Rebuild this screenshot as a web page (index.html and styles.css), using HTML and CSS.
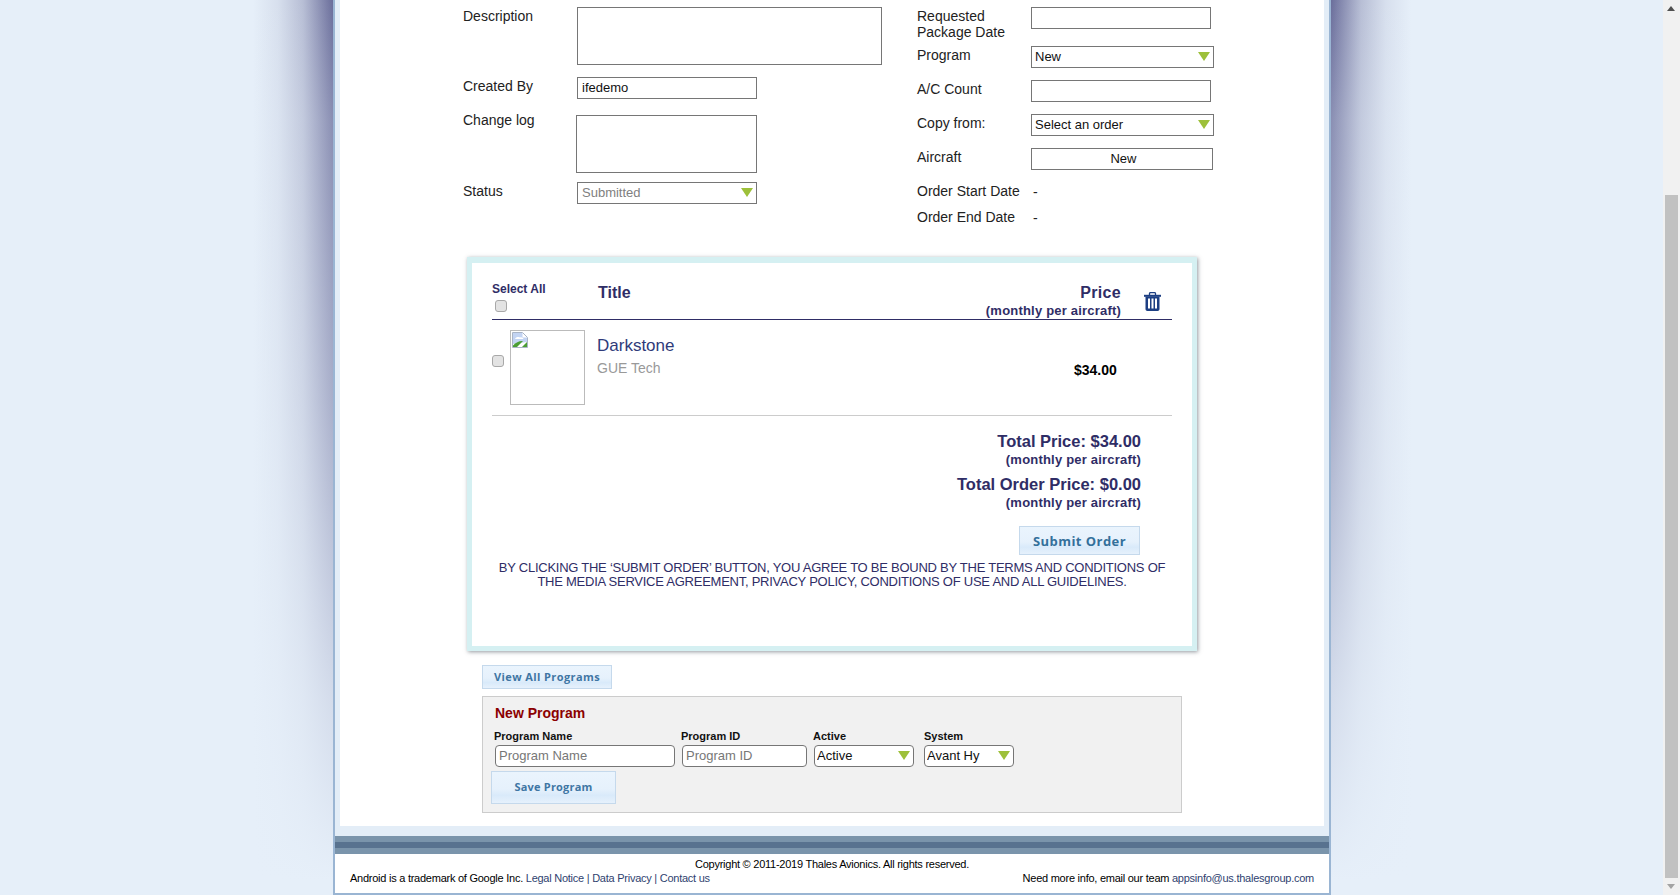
FILE: index.html
```html
<!DOCTYPE html>
<html lang="en">
<head>
<meta charset="utf-8">
<title>New Order</title>
<link rel="stylesheet" href="styles.css">
</head>
<body>
<div class="screen">
  <div class="shade shade-left"></div>
  <div class="wrapper">
    <main class="content">
      <form class="order-form">
        <div class="form-col col-left">
          <label class="lbl">Description</label>
          <textarea class="field ta-wide"></textarea>
          <label class="lbl">Created By</label>
          <input class="field w-180" type="text" value="ifedemo">
          <label class="lbl">Change log</label>
          <textarea class="field ta-log"></textarea>
          <label class="lbl">Status</label>
          <div class="sel w-180"><select class="field-sel muted" disabled><option>Submitted</option></select></div>
        </div>
        <div class="form-col col-right">
          <label class="lbl">Requested<br>Package Date</label>
          <input class="field w-180" type="text">
          <label class="lbl">Program</label>
          <div class="sel w-183"><select class="field-sel"><option>New</option></select></div>
          <label class="lbl">A/C Count</label>
          <input class="field w-180" type="text">
          <label class="lbl">Copy from:</label>
          <div class="sel w-183"><select class="field-sel"><option>Select an order</option></select></div>
          <label class="lbl">Aircraft</label>
          <button class="field new-btn" type="button">New</button>
          <span class="lbl">Order Start Date</span>
          <span class="dash">-</span>
          <span class="lbl">Order End Date</span>
          <span class="dash">-</span>
        </div>
      </form>

      <section class="cart">
        <div class="cart-head">
          <div class="select-all">
            <div class="select-all-text">Select All</div>
            <input class="check check-all" type="checkbox">
          </div>
          <div class="head-title">Title</div>
          <div class="head-price">
            <div class="head-price-main">Price</div>
            <div class="per head-per">(monthly per aircraft)</div>
          </div>
          <svg class="trash" viewBox="0 0 17 19" width="17" height="19" aria-hidden="true">
            <path d="M5.5 3V1.6C5.5 1 6 .6 6.6 .6h3.8c.6 0 1.1 .4 1.1 1V3" fill="none" stroke="#1d3f83" stroke-width="1.3"/>
            <rect x="0" y="2.8" width="17" height="2" fill="#1d3f83"/>
            <path d="M1.5 4.5h14V17c0 1.1-.8 2-1.9 2H3.4c-1.1 0-1.9-.9-1.9-2z" fill="#1d3f83"/>
            <rect x="4" y="6.5" width="2" height="10" fill="#fff"/>
            <rect x="7.5" y="6.5" width="2" height="10" fill="#fff"/>
            <rect x="11" y="6.5" width="2" height="10" fill="#fff"/>
          </svg>
        </div>
        <div class="cart-item">
          <input class="check check-item" type="checkbox">
          <div class="thumb">
            <svg viewBox="0 0 16 16" width="16" height="16" aria-hidden="true">
              <path d="M.5 .5h10l5 5v10H.5z" fill="#fff" stroke="#a9b4c6"/>
              <path d="M1 1h9.500v4.500H15V10L1 12z" fill="#c3d4f3"/>
              <path d="M3 7c1-2 3-2.500 5-1.500 2-.5 3 .5 3.500 1.500z" fill="#fff"/>
              <path d="M1 15v-1.500C4 10 8 8.500 11 9l-6 6z" fill="#4c9e35"/>
              <path d="M10 15l5-5v5z" fill="#4c9e35"/>
            </svg>
          </div>
          <div class="item-info">
            <div class="item-name">Darkstone</div>
            <div class="item-vendor">GUE Tech</div>
          </div>
          <div class="item-price">$34.00</div>
        </div>
        <div class="totals">
          <div class="total">Total Price: $34.00</div>
          <div class="per total-per">(monthly per aircraft)</div>
          <div class="total total-gap">Total Order Price: $0.00</div>
          <div class="per total-per">(monthly per aircraft)</div>
        </div>
        <div class="submit-row"><button class="btn btn-submit" type="button">Submit Order</button></div>
        <p class="legal">BY CLICKING THE ‘SUBMIT ORDER’ BUTTON, YOU AGREE TO BE BOUND BY THE TERMS AND CONDITIONS OF THE MEDIA SERVICE AGREEMENT, PRIVACY POLICY, CONDITIONS OF USE AND ALL GUIDELINES.</p>
      </section>

      <button class="btn btn-view" type="button">View All Programs</button>

      <section class="new-program">
        <h3 class="np-title">New Program</h3>
        <div class="np-fields">
          <div class="np-field f-name">
            <label class="np-label">Program Name</label>
            <input class="field np-input w-full-name" type="text" placeholder="Program Name">
          </div>
          <div class="np-field f-id">
            <label class="np-label">Program ID</label>
            <input class="field np-input w-full-id" type="text" placeholder="Program ID">
          </div>
          <div class="np-field f-active">
            <label class="np-label">Active</label>
            <div class="sel round w-100"><select class="field-sel"><option>Active</option></select></div>
          </div>
          <div class="np-field f-system">
            <label class="np-label">System</label>
            <div class="sel round w-90"><select class="field-sel"><option>Avant Hy</option></select></div>
          </div>
        </div>
        <button class="btn btn-save" type="button">Save Program</button>
      </section>
    </main>
    <div class="gap-pale"></div>
    <div class="bands"></div>
    <footer class="footer">
      <div class="copy">Copyright © 2011-2019 Thales Avionics. All rights reserved.</div>
      <div class="foot-row">
        <div>Android is a trademark of Google Inc. <a href="#">Legal Notice</a> <span class="pipe">|</span> <a href="#">Data Privacy</a> <span class="pipe">|</span> <a href="#">Contact us</a></div>
        <div>Need more info, email our team <a href="#">appsinfo@us.thalesgroup.com</a></div>
      </div>
    </footer>
  </div>
  <div class="shade shade-right"></div>
  <div class="scrollbar">
    <div class="arrow arrow-up"></div>
    <div class="track"><div class="thumb-bar"></div></div>
    <div class="arrow arrow-down"></div>
  </div>
</div>
</body>
</html>
```

FILE: styles.css
```css
* { box-sizing: border-box; }
html, body { margin: 0; height: 895px; overflow: hidden; }
body { font-family: "Liberation Sans", Arial, sans-serif; font-size: 14px; color: #222; background: #e6eff9; }

.screen { display: flex; height: 895px; }

.shade { background-repeat: no-repeat; }
.shade-left {
  flex: 0 0 333px;
  background-image:
    linear-gradient(to bottom, rgba(230,239,249,0) 0, rgba(230,239,249,.25) 120px, rgba(230,239,249,.5) 400px, rgba(230,239,249,.85) 700px, #e6eff9 880px),
    linear-gradient(to right, rgba(107,110,154,0) 0, rgba(107,110,154,.12) 25px, rgba(107,110,154,.38) 50px, rgba(100,103,150,.95) 80px);
  background-size: 100% 100%, 80px 100%;
  background-position: 0 0, right top;
}
.shade-right {
  flex: 1;
  background-image:
    linear-gradient(to bottom, rgba(230,239,249,0) 0, rgba(230,239,249,.25) 120px, rgba(230,239,249,.5) 400px, rgba(230,239,249,.85) 700px, #e6eff9 880px),
    linear-gradient(to left, rgba(107,110,154,0) 0, rgba(107,110,154,.12) 25px, rgba(107,110,154,.38) 50px, rgba(100,103,150,.95) 80px);
  background-size: 100% 100%, 80px 100%;
  background-position: 0 0, left top;
}

.wrapper {
  flex: 0 0 998px;
  height: 895px;
  background: #e3edf7;
  border-left: 2px solid #9ab5d3;
  border-right: 2px solid #9ab5d3;
  border-bottom: 2px solid #9ab5d3;
  display: flex;
  flex-direction: column;
}

.content { height: 826px; margin: 0 5px; background: #fff; overflow: hidden; }
.gap-pale { height: 10px; }
.bands { height: 18px; background: #58728f; border-top: 6px solid #7a94ab; border-bottom: 6px solid #7a94ab; }

/* Order form */
.order-form { display: flex; padding: 7px 0 0 123px; height: 232px; }
.form-col { display: grid; grid-template-columns: 114px 1fr; align-content: start; justify-items: start; }
.col-left { width: 454px; grid-template-rows: 70px 34px 71px 22px; }
.col-right { grid-template-rows: 39px 34px 34px 34px 34px 26px 24px; }

.lbl { display: block; font-size: 14px; line-height: 16px; padding-top: 1px; color: #222; }
.field {
  display: block;
  font-family: "Liberation Sans", Arial, sans-serif;
  font-size: 13px;
  height: 22px;
  padding: 0 4px 2px;
  border: 1px solid #767676;
  background: #fff;
  color: #111;
  resize: none;
  margin: 0;
  border-radius: 0;
  outline: none;
}
.ta-wide { width: 305px; height: 58px; }
.ta-log { width: 181px; height: 58px; margin: 4px 0 0 -1px; }
.w-180 { width: 180px; }
.w-183 { width: 183px; }
.new-btn { width: 182px; text-align: center; padding-left: 7px; }
.dash { font-size: 14px; line-height: 16px; padding: 2px 0 0 2px; color: #222; }

.sel { position: relative; height: 22px; border: 1px solid #767676; background: #fff; }
.sel::after {
  content: "";
  position: absolute;
  right: 3px;
  top: 5px;
  width: 0;
  height: 0;
  border-left: 6px solid transparent;
  border-right: 6px solid transparent;
  border-top: 9px solid #9dc03a;
}
.field-sel {
  appearance: none;
  display: block;
  width: 100%;
  height: 18px;
  border: 0;
  padding: 0 0 0 3px;
  margin: 0;
  background: transparent;
  font-family: "Liberation Sans", Arial, sans-serif;
  font-size: 13px;
  color: #111;
  outline: none;
  opacity: 1;
}
.muted { color: #808080; padding-left: 4px; }
.round { border-radius: 4px; }
.round .field-sel { padding-left: 2px; }
.w-100 { width: 100px; }
.w-90 { width: 90px; }

/* Cart */
.cart {
  width: 730px;
  height: 394px;
  margin: 25px 0 0 127px;
  border: 5px solid #d5f0f2;
  border-top-width: 6px;
  padding: 0 20px;
  background: #fff;
  box-shadow: 1px 1px 4px rgba(60,70,80,.55);
}
.cart-head { display: flex; height: 57px; padding-top: 19px; border-bottom: 1px solid #2f2d66; color: #2f2d66; }
.select-all { flex: 0 0 106px; }
.select-all-text { font-size: 12px; font-weight: 700; line-height: 14px; }
.check {
  appearance: none;
  display: block;
  width: 12px;
  height: 12px;
  margin: 0;
  border: 1px solid #a8a8a8;
  border-radius: 3px;
  background: #e3e3e3;
}
.check-all { margin: 4px 0 0 3px; }
.head-title { flex: 1; font-size: 16px; font-weight: 700; line-height: 18px; padding-top: 2px; }
.head-price { text-align: right; }
.head-price-main { font-size: 16px; font-weight: 700; line-height: 18px; padding-top: 2px; letter-spacing: .3px; }
.per { font-size: 13px; font-weight: 700; line-height: 16px; letter-spacing: .2px; color: #2f2d66; }
.head-per { margin-top: 1px; }
.trash { margin: 10px 11px 0 23px; flex: none; }

.cart-item { display: flex; height: 96px; border-bottom: 1px solid #ccc; padding-top: 10px; }
.check-item { margin: 25px 6px 0 0; flex: none; }
.thumb { flex: 0 0 75px; height: 75px; border: 1px solid #bbb; padding: 1px; }
.thumb svg { display: block; }
.item-info { flex: 1; padding: 6px 0 0 12px; }
.item-name { font-size: 17px; line-height: 20px; color: #2f3b7a; }
.item-vendor { font-size: 14px; line-height: 16px; color: #999; margin-top: 4px; }
.item-price { width: 98px; font-size: 14px; font-weight: 700; color: #000; line-height: 16px; padding-top: 32px; }

.totals { text-align: right; padding: 15px 31px 0 0; }
.total { font-size: 16.500px; font-weight: 700; line-height: 20px; color: #2f2d66; }
.total-gap { margin-top: 6px; }
.total-per { line-height: 16px; margin-top: 1px; }

.submit-row { display: flex; justify-content: flex-end; padding: 15px 32px 0 0; }
.btn {
  display: block;
  font-family: "Open Sans", sans-serif;
  font-weight: 700;
  border: 1px solid #c5d9ec;
  background: linear-gradient(to bottom, #eaf4fd 0, #e6f1fc 55%, #d9eafa 75%, #e6f1fc 100%);
  color: #3f76a4;
  padding: 0;
  margin: 0;
  cursor: pointer;
}
.btn-submit { width: 121px; height: 29px; font-size: 13px; letter-spacing: .45px; color: #33709b; }
.legal { margin: 6px auto 0; width: 672px; font-size: 13px; line-height: 14px; letter-spacing: -.25px; text-align: center; color: #2f2d66; }

.btn-view { width: 130px; height: 24px; margin: 14px 0 0 142px; padding-bottom: 2px; font-size: 11px; letter-spacing: .4px; }

/* New program */
.new-program { width: 700px; height: 117px; margin: 7px 0 0 142px; padding: 8px 11px 0; background: #f1f1f1; border: 1px solid #ccc; }
.np-title { margin: 0 0 0 1px; font-size: 14px; font-weight: 700; line-height: 16px; color: #8b0000; }
.np-fields { display: flex; margin-top: 8px; }
.np-field { display: flex; flex-direction: column; }
.f-name { flex: 0 0 187px; }
.f-id { flex: 0 0 132px; }
.f-active { flex: 0 0 111px; }
.np-label { font-size: 11px; font-weight: 700; line-height: 14px; color: #111; margin-bottom: 2px; }
.np-field .sel, .np-input { margin-left: 1px; }
.f-system .sel { margin-left: 0; }
.np-input { border-radius: 4px; padding: 0 3px 2px; }
.np-input::placeholder { color: #777; opacity: 1; }
.w-full-name { width: 180px; }
.w-full-id { width: 125px; }
.btn-save { width: 125px; height: 33px; margin: 4px 0 0 -3px; padding-bottom: 2px; font-size: 11px; letter-spacing: .2px; }

/* Footer */
.footer { flex: 1; background: #fff; padding: 3px 15px 0 15px; font-size: 11px; line-height: 14px; letter-spacing: -.25px; color: #000; }
.copy { text-align: center; }
.foot-row { display: flex; justify-content: space-between; }
.footer a { color: #2f3f6f; text-decoration: none; }
.pipe { color: #2f3f6f; }

/* Scrollbar */
.scrollbar { flex: 0 0 17px; display: flex; flex-direction: column; background: #f1f1f1; }
.arrow { flex: 0 0 17px; position: relative; }
.arrow::after {
  content: "";
  position: absolute;
  left: 4px;
  top: 6px;
  width: 0;
  height: 0;
  border-left: 4px solid transparent;
  border-right: 4px solid transparent;
}
.arrow-up::after { border-bottom: 5px solid #505050; }
.arrow-down::after { border-top: 5px solid #a3a3a3; }
.track { flex: 1; padding: 178px 2px 0; }
.thumb-bar { height: 683px; background: #c1c1c1; }
```
